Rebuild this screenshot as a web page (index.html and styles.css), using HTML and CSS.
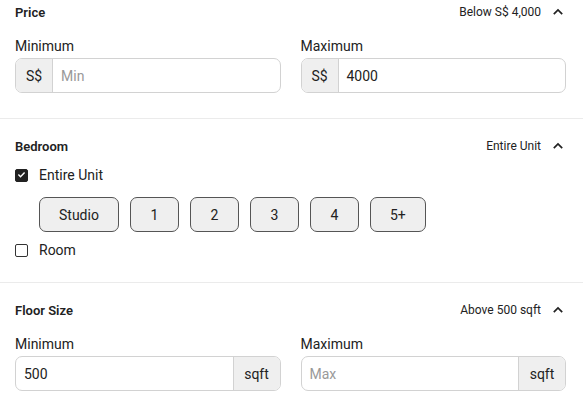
FILE: index.html
```html
<!DOCTYPE html>
<html>
<head>
<meta charset="utf-8">
<link rel="stylesheet" href="styles.css">
</head>
<body>
<div class="panel">
  <section class="section first">
    <div class="head">
      <span class="title">Price</span>
      <span class="summary">Below S$ 4,000
        <svg class="chev" width="16" height="16" viewBox="0 0 16 16"><path d="M3.8 10.2 L8 6 L12.2 10.2" fill="none" stroke="#222" stroke-width="1.7"/></svg>
      </span>
    </div>
    <div class="grid">
      <div class="field">
        <div class="label">Minimum</div>
        <div class="input"><span class="addon left">S$</span><span class="value placeholder">Min</span></div>
      </div>
      <div class="field">
        <div class="label">Maximum</div>
        <div class="input"><span class="addon left">S$</span><span class="value">4000</span></div>
      </div>
    </div>
  </section>
  <section class="section">
    <div class="head">
      <span class="title">Bedroom</span>
      <span class="summary">Entire Unit
        <svg class="chev" width="16" height="16" viewBox="0 0 16 16"><path d="M3.8 10.2 L8 6 L12.2 10.2" fill="none" stroke="#222" stroke-width="1.7"/></svg>
      </span>
    </div>
    <div class="check-row r1">
      <span class="box checked"><svg width="13" height="13" viewBox="0 0 13 13"><path d="M3.4 6.6 L5.5 8.7 L9.6 4.4" fill="none" stroke="#fff" stroke-width="1.4"/></svg></span>
      <span>Entire Unit</span>
    </div>
    <div class="chips">
      <span class="chip">Studio</span>
      <span class="chip">1</span>
      <span class="chip">2</span>
      <span class="chip">3</span>
      <span class="chip">4</span>
      <span class="chip">5+</span>
    </div>
    <div class="check-row r2">
      <span class="box"></span>
      <span>Room</span>
    </div>
  </section>
  <section class="section">
    <div class="head">
      <span class="title">Floor Size</span>
      <span class="summary">Above 500 sqft
        <svg class="chev" width="16" height="16" viewBox="0 0 16 16"><path d="M3.8 10.2 L8 6 L12.2 10.2" fill="none" stroke="#222" stroke-width="1.7"/></svg>
      </span>
    </div>
    <div class="grid">
      <div class="field">
        <div class="label">Minimum</div>
        <div class="input"><span class="value">500</span><span class="addon right">sqft</span></div>
      </div>
      <div class="field">
        <div class="label">Maximum</div>
        <div class="input"><span class="value placeholder">Max</span><span class="addon right">sqft</span></div>
      </div>
    </div>
  </section>
</div>
</body>
</html>
```
FILE: styles.css
```css
html, body {
  margin: 0;
  padding: 0;
  background: #fff;
}
body {
  font-family: Roboto, "Liberation Sans", sans-serif;
  color: #222;
  font-size: 14px;
}
.section {
  padding: 17px 17px 22px 15px;
  border-top: 1px solid #ebebeb;
}
.section.first {
  padding-top: 2px;
  padding-bottom: 25px;
  border-top: none;
}
.head {
  display: flex;
  justify-content: space-between;
  align-items: center;
  height: 20px;
}
.title {
  font-size: 13px;
  font-weight: 600;
}
.summary {
  display: flex;
  align-items: center;
  gap: 9px;
  font-size: 12px;
}
.chev {
  display: block;
}
.grid {
  display: grid;
  grid-template-columns: 1fr 1fr;
  column-gap: 20px;
  margin-top: 15px;
}
.label {
  line-height: 18px;
  margin-bottom: 3px;
}
.input {
  display: flex;
  height: 35px;
  box-sizing: border-box;
  border: 1px solid #d2d2d2;
  border-radius: 7px;
  overflow: hidden;
}
.addon {
  display: flex;
  align-items: center;
  justify-content: center;
  background: #efefef;
  flex: none;
}
.addon.left {
  width: 36px;
  border-right: 1px solid #d2d2d2;
}
.addon.right {
  width: 46px;
  border-left: 1px solid #d2d2d2;
}
.value {
  flex: 1;
  display: flex;
  align-items: center;
  padding-left: 8px;
}
.placeholder {
  color: #999;
}
.check-row {
  display: flex;
  align-items: center;
  gap: 11px;
  height: 20px;
}
.r1 { margin-top: 9px; }
.r2 { margin-top: 8px; }
.box {
  width: 13px;
  height: 13px;
  box-sizing: border-box;
  border: 1.5px solid #333;
  border-radius: 2px;
  flex: none;
  display: flex;
}
.box.checked {
  background: #222;
  border-color: #222;
}
.box.checked svg {
  margin: -1.5px;
}
.chips {
  display: flex;
  gap: 11px;
  margin-top: 12px;
  padding-left: 24px;
}
.chip {
  height: 35px;
  min-width: 49px;
  box-sizing: border-box;
  padding: 0 19px;
  display: flex;
  align-items: center;
  justify-content: center;
  background: #efefef;
  border: 1px solid #555;
  border-radius: 7px;
}
```
